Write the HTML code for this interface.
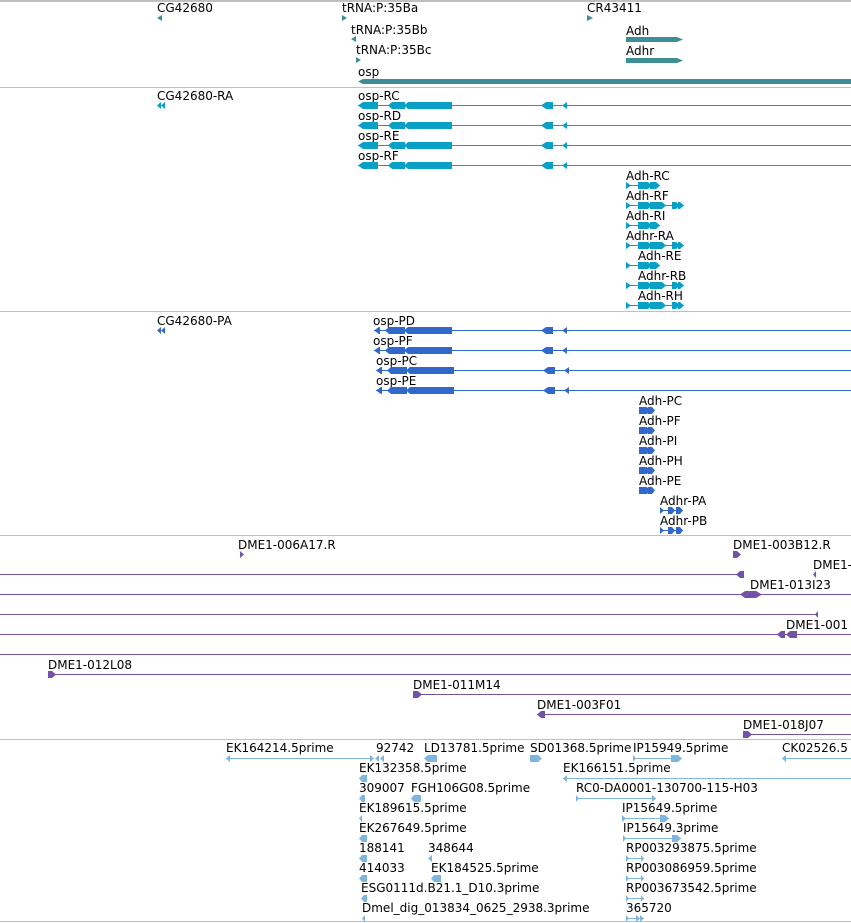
<!DOCTYPE html>
<html><head><meta charset="utf-8"><style>
html,body{margin:0;padding:0;background:#fff;width:851px;height:923px;overflow:hidden}
svg{display:block}
text{font-family:"DejaVu Sans","Liberation Sans",sans-serif;font-size:12px;fill:#000}
rect{shape-rendering:crispEdges}
</style></head><body>
<svg width="851" height="923" viewBox="0 0 851 923" xmlns="http://www.w3.org/2000/svg">
<defs>
<g id="ospR" fill="#0a9fc4">
<rect x="358" y="0" width="493" height="1"/>
<polygon points="358,0.5 363,-3 378,-3 378,4 363,4"/>
<polygon points="388,0.5 392,-3 405,-3 405,4 392,4"/>
<polygon points="404,0.5 408,-3 452,-3 452,4 408,4"/>
<polygon points="541,0.5 546,-3 553,-3 553,4 546,4"/>
<polygon points="562,0.5 567,-3 567,4"/>
</g>
<g id="ospP" fill="#3168cc">
<rect x="374" y="0" width="477" height="1"/>
<polygon points="374,0.5 379,-3 380,-3 380,4 379,4"/>
<polygon points="385,0.5 389,-3 405,-3 405,4 389,4"/>
<polygon points="404,0.5 408,-3 452,-3 452,4 408,4"/>
<polygon points="541,0.5 546,-3 553,-3 553,4 546,4"/>
<polygon points="562,0.5 567,-3 567,4"/>
</g>
<g id="adhS" fill="#0a9fc4">
<rect x="0" y="0" width="34" height="1"/>
<polygon points="0,-3 5,0.5 0,4"/><polygon points="12,-3 22,-3 26,0.5 22,4 12,4"/><polygon points="24,-3 30,-3 34,0.5 30,4 24,4"/>
</g>
<g id="adhL" fill="#0a9fc4">
<rect x="0" y="0" width="58" height="1"/>
<polygon points="0,-3 5,0.5 0,4"/><polygon points="12,-3 22,-3 26,0.5 22,4 12,4"/><polygon points="24,-3 36,-3 40,0.5 36,4 24,4"/><polygon points="46,-3 50,-3 54,0.5 50,4 46,4"/><polygon points="52,-3 54,-3 58,0.5 54,4 52,4"/>
</g>
<g id="adhP" fill="#3168cc">
<polygon points="0,-3 8,-3 11,0.5 8,4 0,4"/><polygon points="9,-3 13,-3 16,0.5 13,4 9,4"/>
</g>
<g id="adhrP" fill="#3168cc">
<rect x="0" y="0" width="23" height="1"/>
<polygon points="0,-3 4,0.5 0,4"/><polygon points="8,-3 12,-3 15,0.5 12,4 8,4"/><polygon points="16,-3 20,-3 23,0.5 20,4 16,4"/>
</g>
</defs>

<g fill="#c0c0c0">
<rect x="0" y="0" width="851" height="2"/>
<rect x="0" y="87" width="851" height="1"/>
<rect x="0" y="311" width="851" height="1"/>
<rect x="0" y="535" width="851" height="1"/>
<rect x="0" y="739" width="851" height="1"/>
<rect x="0" y="921" width="851" height="1"/>
</g>

<text x="157" y="12">CG42680</text>
<polygon points="157,18 162,15 162,21" fill="#3d8f95"/>
<text x="342" y="12">tRNA:P:35Ba</text>
<polygon points="342,15 347,18 342,21" fill="#3d8f95"/>
<text x="587" y="12">CR43411</text>
<polygon points="587,15 593,18 587,21" fill="#3d8f95"/>
<text x="351" y="34">tRNA:P:35Bb</text>
<polygon points="351,39 356,36 356,42" fill="#3d8f95"/>
<text x="356" y="54">tRNA:P:35Bc</text>
<polygon points="356,57 361,60 356,63" fill="#3d8f95"/>
<text x="626" y="35">Adh</text>
<polygon points="626,37 677,37 683,39.5 677,42 626,42" fill="#3d8f95"/>
<text x="626" y="55">Adhr</text>
<polygon points="626,58 677,58 683,60.5 677,63 626,63" fill="#3d8f95"/>
<text x="358" y="76">osp</text>
<polygon points="358,81.5 363,79 851,79 851,84 363,84" fill="#3d8f95"/>

<text x="157" y="100">CG42680-RA</text>
<polygon points="157,105.5 161,102 161,109" fill="#0a9fc4"/><polygon points="161,105.5 165,102 165,109" fill="#0a9fc4"/>
<text x="358" y="100">osp-RC</text><use href="#ospR" transform="translate(0,105)"/>
<text x="358" y="120">osp-RD</text><use href="#ospR" transform="translate(0,125)"/>
<text x="358" y="140">osp-RE</text><use href="#ospR" transform="translate(0,145)"/>
<text x="358" y="160">osp-RF</text><use href="#ospR" transform="translate(0,165)"/>
<text x="626" y="180">Adh-RC</text><use href="#adhS" transform="translate(626,185)"/>
<text x="626" y="200">Adh-RF</text><use href="#adhL" transform="translate(626,205)"/>
<text x="626" y="220">Adh-RI</text><use href="#adhS" transform="translate(626,225)"/>
<text x="626" y="240">Adhr-RA</text><use href="#adhL" transform="translate(626,245)"/>
<text x="638" y="260">Adh-RE</text><use href="#adhS" transform="translate(626,265)"/>
<text x="638" y="280">Adhr-RB</text><use href="#adhL" transform="translate(626,285)"/>
<text x="638" y="300">Adh-RH</text><use href="#adhL" transform="translate(626,305)"/>

<text x="157" y="325">CG42680-PA</text>
<polygon points="157,330.5 161,327 161,334" fill="#3168cc"/><polygon points="161,330.5 165,327 165,334" fill="#3168cc"/>
<text x="373" y="325">osp-PD</text><use href="#ospP" transform="translate(0,330)"/>
<text x="373" y="345">osp-PF</text><use href="#ospP" transform="translate(0,350)"/>
<text x="376" y="365">osp-PC</text><use href="#ospP" transform="translate(2,370)"/>
<text x="376" y="385">osp-PE</text><use href="#ospP" transform="translate(2,390)"/>
<text x="639" y="405">Adh-PC</text><use href="#adhP" transform="translate(639,410)"/>
<text x="639" y="425">Adh-PF</text><use href="#adhP" transform="translate(639,430)"/>
<text x="639" y="445">Adh-PI</text><use href="#adhP" transform="translate(639,450)"/>
<text x="639" y="465">Adh-PH</text><use href="#adhP" transform="translate(639,470)"/>
<text x="639" y="485">Adh-PE</text><use href="#adhP" transform="translate(639,490)"/>
<text x="660" y="505">Adhr-PA</text><use href="#adhrP" transform="translate(660,510)"/>
<text x="660" y="525">Adhr-PB</text><use href="#adhrP" transform="translate(660,530)"/>

<g fill="#7353a8">
<polygon points="240,551 244,554.5 240,558"/>
<polygon points="733,551 737,551 741,554.5 737,558 733,558"/>
<rect x="0" y="574" width="740" height="1"/>
<polygon points="736,574.5 740,571 744,571 744,578 740,578"/>
<polygon points="813,574.5 816,571 816,578"/>
<rect x="0" y="594" width="851" height="1"/>
<polygon points="740,594.5 745,591 756,591 762,594.5 756,598 745,598"/>
<rect x="0" y="614" width="818" height="1"/>
<polygon points="815,614.5 818,611 818,618"/>
<rect x="0" y="634" width="851" height="1"/>
<polygon points="777,634.5 781,631 785,631 785,638 781,638"/><polygon points="786,634.5 790,631 797,631 797,638 790,638"/>
<rect x="0" y="654" width="851" height="1"/>
<rect x="48" y="674" width="803" height="1"/>
<polygon points="48,671 52,671 56,674.5 52,678 48,678"/>
<rect x="413" y="694" width="438" height="1"/>
<polygon points="413,691 418,691 422,694.5 418,698 413,698"/>
<rect x="537" y="714" width="314" height="1"/>
<polygon points="537,714.5 541,711 545,711 545,718 541,718"/>
<rect x="743" y="734" width="108" height="1"/>
<polygon points="743,731 748,731 752,734.5 748,738 743,738"/>
</g>
<text x="238" y="549">DME1-006A17.R</text>
<text x="733" y="549">DME1-003B12.R</text>
<text x="813" y="569">DME1-</text>
<text x="750" y="589">DME1-013I23</text>
<text x="786" y="629">DME1-001</text>
<text x="48" y="669">DME1-012L08</text>
<text x="413" y="689">DME1-011M14</text>
<text x="537" y="709">DME1-003F01</text>
<text x="743" y="729">DME1-018J07</text>

<g fill="#7fb6df">
<rect x="226" y="758" width="148" height="1"/><polygon points="226,758.5 230,755 230,762"/><polygon points="370,755 374,758.5 370,762"/>
<polygon points="375,758.5 379,755 379,762"/><polygon points="380,758.5 384,755 384,762"/>
<polygon points="424,758.5 428,755 437,755 437,762 428,762"/>
<polygon points="530,755 538,755 542,758.5 538,762 530,762"/>
<rect x="633" y="758" width="49" height="1"/><polygon points="633,755 636,758.5 633,762"/><polygon points="671,755 678,755 682,758.5 678,762 671,762"/>
<rect x="782" y="758" width="69" height="1"/><polygon points="782,758.5 786,755 786,762"/>
<polygon points="359,778.5 362,775 367,775 367,782 362,782"/>
<rect x="563" y="778" width="288" height="1"/><polygon points="563,778.5 567,775 567,782"/>
<polygon points="359,798.5 362,795 365,795 365,802 362,802"/>
<polygon points="411,798.5 414,795 421,795 421,802 414,802"/>
<rect x="576" y="798" width="80" height="1"/><polygon points="576,795 579,798.5 576,802"/><polygon points="652,795 656,798.5 652,802"/>
<polygon points="359,818.5 362,815 362,822"/>
<rect x="622" y="818" width="47" height="1"/><polygon points="622,815 626,818.5 622,822"/><polygon points="660,815 665,815 669,818.5 665,822 660,822"/>
<polygon points="359,838.5 362,835 367,835 367,842 362,842"/>
<rect x="623" y="838" width="58" height="1"/><polygon points="623,835 626,838.5 623,842"/><polygon points="672,835 677,835 681,838.5 677,842 672,842"/>
<polygon points="359,858.5 362,855 367,855 367,862 362,862"/>
<polygon points="428,858.5 432,855 432,862"/>
<rect x="626" y="858" width="18" height="1"/><polygon points="626,855 629,858.5 626,862"/><polygon points="641,855 644,858.5 641,862"/>
<polygon points="359,878.5 362,875 367,875 367,882 362,882"/>
<polygon points="431,878.5 434,875 441,875 441,882 434,882"/>
<rect x="626" y="878" width="18" height="1"/><polygon points="626,875 629,878.5 626,882"/><polygon points="641,875 644,878.5 641,882"/>
<polygon points="361,898.5 364,895 367,895 367,902 364,902"/>
<rect x="626" y="898" width="18" height="1"/><polygon points="626,895 629,898.5 626,902"/><polygon points="641,895 644,898.5 641,902"/>
<polygon points="362,918.5 365,915 365,922"/>
<rect x="626" y="918" width="18" height="1"/><polygon points="626,915 629,918.5 626,922"/><polygon points="636,915 640,918.5 636,922"/><polygon points="640,915 644,918.5 640,922"/>
</g>
<text x="226" y="752">EK164214.5prime</text>
<text x="376" y="752">92742</text>
<text x="424" y="752">LD13781.5prime</text>
<text x="530" y="752">SD01368.5prime</text>
<text x="633" y="752">IP15949.5prime</text>
<text x="782" y="752">CK02526.5</text>
<text x="359" y="772">EK132358.5prime</text>
<text x="563" y="772">EK166151.5prime</text>
<text x="359" y="792">309007</text>
<text x="411" y="792">FGH106G08.5prime</text>
<text x="576" y="792">RC0-DA0001-130700-115-H03</text>
<text x="359" y="812">EK189615.5prime</text>
<text x="622" y="812">IP15649.5prime</text>
<text x="359" y="832">EK267649.5prime</text>
<text x="623" y="832">IP15649.3prime</text>
<text x="359" y="852">188141</text>
<text x="428" y="852">348644</text>
<text x="626" y="852">RP003293875.5prime</text>
<text x="359" y="872">414033</text>
<text x="431" y="872">EK184525.5prime</text>
<text x="626" y="872">RP003086959.5prime</text>
<text x="361" y="892">ESG0111d.B21.1_D10.3prime</text>
<text x="626" y="892">RP003673542.5prime</text>
<text x="362" y="912">Dmel_dig_013834_0625_2938.3prime</text>
<text x="626" y="912">365720</text>
</svg>
</body></html>
